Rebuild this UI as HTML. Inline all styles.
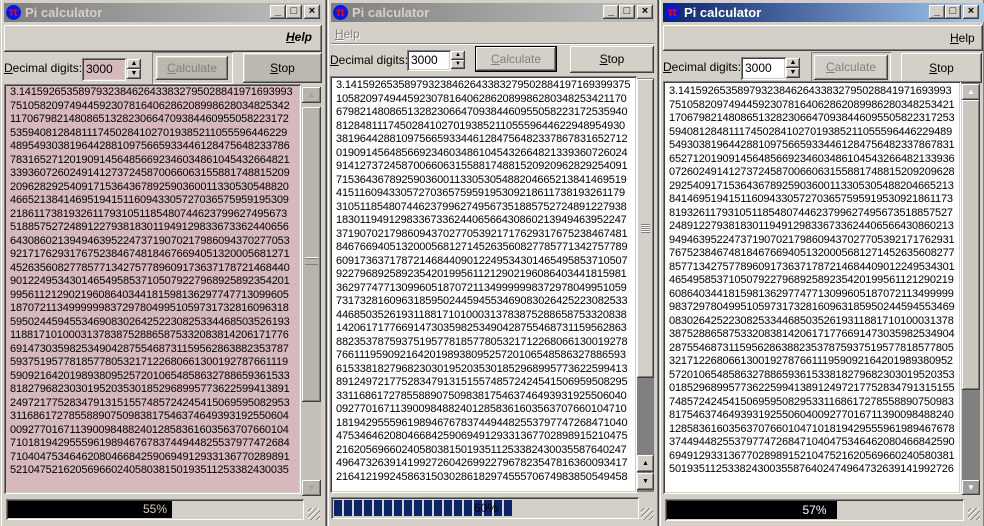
<!DOCTYPE html>
<html><head><meta charset="utf-8">
<style>
*{margin:0;padding:0;box-sizing:border-box}
body{width:984px;height:526px;background:#d4d0c8;position:relative;overflow:hidden;font-family:"Liberation Sans",sans-serif;font-size:11px;color:#000}
.a{position:absolute}
.win{position:absolute;top:0;height:526px;background:#d4d0c8;border-left:1px solid #d4d0c8;box-shadow:inset 1px 0 #fff,inset -1px 0 #404040,inset -2px 0 #808080}
.title{position:absolute;height:19px;color:#d4d0c8;font-weight:bold;font-size:13px;line-height:19px;padding-left:21px;background:linear-gradient(90deg,#808080,#c0c0c0)}
.title.act{background:linear-gradient(90deg,#0a246a,#a6caf0);color:#fff}
.ico{position:absolute;left:2px;top:2px;width:15px;height:15px;border-radius:50%;background:#0018f0;color:#f00;font-size:12px;line-height:14px;text-align:center;font-weight:bold}
.tb{position:absolute;top:2px;width:16px;height:14px;background:#d4d0c8;box-shadow:inset -1px -1px #404040,inset 1px 1px #fff,inset -2px -2px #808080;font-size:11px;line-height:13px;text-align:center;color:#000;font-weight:bold}
.raised{box-shadow:inset -1px -1px #404040,inset 1px 1px #fff,inset -2px -2px #808080,inset 2px 2px #d4d0c8}
.sunk{box-shadow:inset 1px 1px #808080,inset -1px -1px #fff,inset 2px 2px #404040,inset -2px -2px #d4d0c8}
.btn{position:absolute;background:#d4d0c8;text-align:center;font-size:12px}
.txt{position:absolute;font-size:11px;line-height:13.5px;padding:2px 0 0 6px;overflow:hidden;white-space:pre;letter-spacing:-0.17px}
.sb{position:absolute;background:#d4d0c8}
.sbb{position:absolute;background:#d4d0c8;box-shadow:inset -1px -1px #404040,inset 1px 1px #fff,inset -2px -2px #808080}
.u{text-decoration:underline}
.grip{position:absolute;width:12px;height:12px;background:repeating-linear-gradient(135deg,transparent 0 2px,#808080 2px 3px,#fff 3px 4px)}
</style></head><body>

<!-- Window 1 -->
<div class="win" style="left:0;width:327px"></div>
<div class="title" style="left:4px;top:3px;width:318px"><div class="ico">π</div>Pi calculator
 <div class="tb" style="left:266px">_</div><div class="tb" style="left:282px">□</div><div class="tb" style="left:300px">×</div></div>
<div class="a raised" style="left:4px;top:25px;width:318px;height:27px"></div>
<div class="a" style="left:286px;top:30px;font-weight:bold;font-style:italic;font-size:12px"><span class="u">H</span>elp</div>
<div class="a" style="left:4px;top:61px;font-size:12px"><span class="u">D</span>ecimal digits:</div>
<div class="a sunk" style="left:82px;top:58px;width:44px;height:23px;background:#d6b9bd;font-size:12px;padding:4px 0 0 4px">3000</div>
<div class="a raised" style="left:127px;top:59px;width:14px;height:10px;font-size:7px;text-align:center;line-height:10px">▲</div>
<div class="a raised" style="left:127px;top:69px;width:14px;height:10px;font-size:7px;text-align:center;line-height:10px">▼</div>
<div class="a" style="left:152px;top:52px;width:81px;height:32px;box-shadow:inset 1px 1px #808080,inset -1px -1px #fff"></div>
<div class="btn raised" style="left:156px;top:56px;width:72px;height:24px;line-height:24px;color:#808080;background:#bcb8b0"><span class="u">C</span>alculate</div>
<div class="btn raised" style="left:243px;top:53px;width:79px;height:30px;line-height:30px;background:#bcb8b0"><span class="u">S</span>top</div>
<div class="txt sunk" style="left:4px;top:84px;width:297px;height:410px;background:#d6b9bd">3.1415926535897932384626433832795028841971693993
75105820974944592307816406286208998628034825342
11706798214808651328230664709384460955058223172
53594081284811174502841027019385211055596446229
48954930381964428810975665933446128475648233786
78316527120190914564856692346034861045432664821
33936072602491412737245870066063155881748815209
20962829254091715364367892590360011330530548820
46652138414695194151160943305727036575959195309
21861173819326117931051185480744623799627495673
51885752724891227938183011949129833673362440656
64308602139494639522473719070217986094370277053
92171762931767523846748184676694051320005681271
45263560827785771342757789609173637178721468440
90122495343014654958537105079227968925892354201
99561121290219608640344181598136297747713099605
18707211349999998372978049951059731732816096318
59502445945534690830264252230825334468503526193
11881710100031378387528865875332083814206171776
69147303598253490428755468731159562863882353787
59375195778185778053217122680661300192787661119
59092164201989380952572010654858632788659361533
81827968230301952035301852968995773622599413891
24972177528347913151557485724245415069595082953
31168617278558890750983817546374649393192550604
00927701671139009848824012858361603563707660104
71018194295559619894676783744944825537977472684
71040475346462080466842590694912933136770289891
52104752162056966024058038150193511253382430035</div>
<div class="sb" style="left:301px;top:86px;width:20px;height:408px;background:#c4c0b8"></div>
<div class="sbb" style="left:302px;top:87px;width:19px;height:16px;color:#a0a0a0;font-size:8px;text-align:center;line-height:16px;background:#b8b4ac">▲</div>
<div class="sbb" style="left:302px;top:107px;width:19px;height:295px;background:#b8b4ac"></div>
<div class="a" style="left:305px;top:258px;width:13px;height:7px;border-top:1px solid #808080;border-bottom:1px solid #808080;box-shadow:0 -1px #fff"></div>
<div class="sbb" style="left:302px;top:480px;width:19px;height:16px;color:#a0a0a0;font-size:8px;text-align:center;line-height:16px;background:#b8b4ac">▼</div>
<div class="a sunk" style="left:6px;top:499px;width:298px;height:21px;background:#d4d0c8"></div>
<div class="a" style="left:8px;top:501px;width:164px;height:17px;background:#000"></div>
<div class="a" style="left:8px;top:501px;width:294px;height:17px;text-align:center;line-height:17px;color:#d4d0c8;font-size:12px">55%</div>
<div class="grip" style="left:308px;top:508px"></div>

<!-- Window 2 -->
<div class="win" style="left:327px;width:332px"></div>
<div class="title" style="left:331px;top:3px;width:323px"><div class="ico">π</div>Pi calculator
 <div class="tb" style="left:272px">_</div><div class="tb" style="left:288px">□</div><div class="tb" style="left:306px">×</div></div>
<div class="a" style="left:331px;top:24px;width:323px;height:20px;border-bottom:1px solid #808080;box-shadow:0 1px #fff"></div>
<div class="a" style="left:335px;top:27px;font-size:12px;color:#808080;text-shadow:1px 1px #fff"><span class="u">H</span>elp</div>
<div class="a" style="left:330px;top:53px;font-size:12px"><span class="u">D</span>ecimal digits:</div>
<div class="a sunk" style="left:407px;top:50px;width:44px;height:21px;background:#fff;font-size:12px;padding:3px 0 0 4px">3000</div>
<div class="a raised" style="left:451px;top:51px;width:14px;height:9px;font-size:6px;text-align:center;line-height:9px">▲</div>
<div class="a raised" style="left:451px;top:60px;width:14px;height:9px;font-size:6px;text-align:center;line-height:9px">▼</div>
<div class="btn" style="left:475px;top:46px;width:82px;height:26px;line-height:24px;color:#808080;border:1px solid #000;box-shadow:inset -1px -1px #404040,inset 1px 1px #fff,inset -2px -2px #808080,inset 2px 2px #d4d0c8"><span class="u">C</span>alculate</div>
<div class="btn raised" style="left:570px;top:46px;width:84px;height:27px;line-height:27px"><span class="u">S</span>top</div>
<div class="txt sunk" style="left:330px;top:76px;width:307px;height:417px;background:#fff;padding-top:3px">3.141592653589793238462643383279502884197169399375
1058209749445923078164062862089986280348253421170
6798214808651328230664709384460955058223172535940
8128481117450284102701938521105559644622948954930
3819644288109756659334461284756482337867831652712
0190914564856692346034861045432664821339360726024
9141273724587006606315588174881520920962829254091
7153643678925903600113305305488204665213841469519
4151160943305727036575959195309218611738193261179
3105118548074462379962749567351885752724891227938
1830119491298336733624406566430860213949463952247
3719070217986094370277053921717629317675238467481
8467669405132000568127145263560827785771342757789
6091736371787214684409012249534301465495853710507
9227968925892354201995611212902196086403441815981
3629774771309960518707211349999998372978049951059
7317328160963185950244594553469083026425223082533
4468503526193118817101000313783875288658753320838
1420617177669147303598253490428755468731159562863
8823537875937519577818577805321712268066130019278
7661119590921642019893809525720106548586327886593
6153381827968230301952035301852968995773622599413
8912497217752834791315155748572424541506959508295
3311686172785588907509838175463746493931925506040
0927701671139009848824012858361603563707660104710
1819429555961989467678374494482553797747268471040
4753464620804668425906949129331367702898915210475
2162056966024058038150193511253382430035587640247
4964732639141992726042699227967823547816360093417
2164121992458631503028618297455570674983850549458</div>
<div class="sb" style="left:637px;top:78px;width:17px;height:414px;background:#808080"></div>
<div class="sbb" style="left:637px;top:79px;width:17px;height:299px"></div>
<div class="a" style="left:641px;top:224px;width:9px;height:9px;background:repeating-linear-gradient(180deg,#808080 0 1px,#fff 1px 2px)"></div>
<div class="sbb" style="left:637px;top:455px;width:17px;height:17px;font-size:7px;text-align:center;line-height:17px">▲</div>
<div class="sbb" style="left:637px;top:473px;width:17px;height:17px;font-size:7px;text-align:center;line-height:17px">▼</div>
<div class="a sunk" style="left:331px;top:497px;width:308px;height:22px;background:#d4d0c8"></div>
<div class="a" style="left:334px;top:500px;width:180px;height:16px;background:repeating-linear-gradient(90deg,#0a246a 0 8px,transparent 8px 10px)"></div>
<div class="a" style="left:334px;top:500px;width:304px;height:16px;text-align:center;line-height:16px;color:#000;font-size:12px">60%</div>
<div class="grip" style="left:641px;top:508px"></div>

<!-- Window 3 -->
<div class="win" style="left:659px;width:326px"></div>
<div class="title act" style="left:663px;top:3px;width:321px"><div class="ico">π</div>Pi calculator
 <div class="tb" style="left:266px">_</div><div class="tb" style="left:282px">□</div><div class="tb" style="left:300px">×</div></div>
<div class="a raised" style="left:663px;top:25px;width:320px;height:26px"></div>
<div class="a" style="left:950px;top:31px;font-size:12px"><span class="u">H</span>elp</div>
<div class="a" style="left:663px;top:60px;font-size:12px"><span class="u">D</span>ecimal digits:</div>
<div class="a sunk" style="left:741px;top:57px;width:45px;height:23px;background:#fff;font-size:12px;padding:4px 0 0 4px">3000</div>
<div class="a raised" style="left:786px;top:58px;width:14px;height:10px;font-size:7px;text-align:center;line-height:10px">▲</div>
<div class="a raised" style="left:786px;top:68px;width:14px;height:10px;font-size:7px;text-align:center;line-height:10px">▼</div>
<div class="a" style="left:811px;top:52px;width:80px;height:32px;box-shadow:inset 1px 1px #808080,inset -1px -1px #fff"></div>
<div class="btn raised" style="left:814px;top:55px;width:74px;height:25px;line-height:25px;color:#808080"><span class="u">C</span>alculate</div>
<div class="btn raised" style="left:901px;top:53px;width:81px;height:30px;line-height:30px"><span class="u">S</span>top</div>
<div class="txt sunk" style="left:663px;top:81px;width:298px;height:413px;background:#fff;padding-top:4px">3.1415926535897932384626433832795028841971693993
751058209749445923078164062862089986280348253421
170679821480865132823066470938446095505822317253
594081284811174502841027019385211055596446229489
549303819644288109756659334461284756482337867831
652712019091456485669234603486104543266482133936
072602491412737245870066063155881748815209209628
292540917153643678925903600113305305488204665213
841469519415116094330572703657595919530921861173
819326117931051185480744623799627495673518857527
248912279381830119491298336733624406566430860213
949463952247371907021798609437027705392171762931
767523846748184676694051320005681271452635608277
857713427577896091736371787214684409012249534301
465495853710507922796892589235420199561121290219
608640344181598136297747713099605187072113499999
983729780499510597317328160963185950244594553469
083026425223082533446850352619311881710100031378
387528865875332083814206171776691473035982534904
287554687311595628638823537875937519577818577805
321712268066130019278766111959092164201989380952
572010654858632788659361533818279682303019520353
018529689957736225994138912497217752834791315155
748572424541506959508295331168617278558890750983
817546374649393192550604009277016711390098488240
128583616035637076601047101819429555961989467678
374494482553797747268471040475346462080466842590
694912933136770289891521047521620569660240580381
501935112533824300355876402474964732639141992726</div>
<div class="sb" style="left:962px;top:83px;width:18px;height:411px;background:#808080"></div>
<div class="sbb" style="left:962px;top:84px;width:18px;height:16px;color:#fff;font-size:8px;text-align:center;line-height:16px;background:#c4c0b8">▲</div>
<div class="sbb" style="left:962px;top:100px;width:18px;height:290px;background:#cac6be"></div>
<div class="sbb" style="left:962px;top:480px;width:18px;height:15px;color:#fff;font-size:8px;text-align:center;line-height:15px;background:#a0a0a0">▼</div>
<div class="a sunk" style="left:665px;top:499px;width:299px;height:22px;background:#d4d0c8"></div>
<div class="a" style="left:667px;top:501px;width:170px;height:18px;background:#000"></div>
<div class="a" style="left:667px;top:501px;width:295px;height:18px;text-align:center;line-height:18px;color:#fff;font-size:12px">57%</div>
<div class="grip" style="left:968px;top:508px"></div>
</body></html>
